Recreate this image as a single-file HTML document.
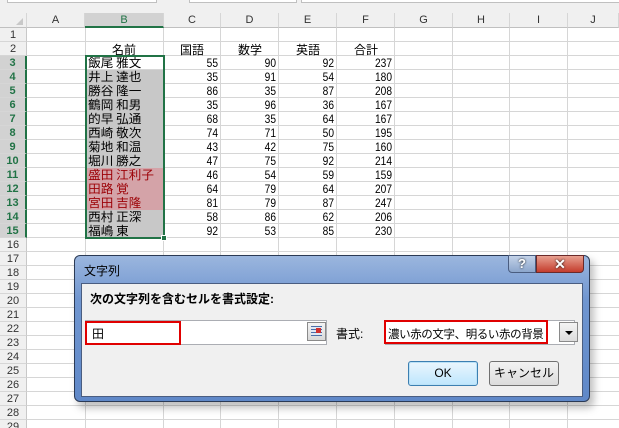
<!DOCTYPE html>
<html><head><meta charset="utf-8">
<style>
*{margin:0;padding:0;box-sizing:border-box}
html,body{width:619px;height:428px;overflow:hidden}
body{background:#fff;position:relative;font-family:"Liberation Sans","Noto Sans CJK JP",sans-serif;font-size:12px;color:#000}
.a{position:absolute}
.vl{position:absolute;width:1px;height:415px;background:#d6d6d6}
.hl{position:absolute;left:0;width:619px;height:1px;background:#d6d6d6}
.rh{position:absolute;left:0;width:27px;height:14px;background:#f0f0f0;border-bottom:1px solid #d6d6d6;border-right:1px solid #c8c8c8;text-align:center;font-size:11px;line-height:14px;color:#333}
.ch{position:absolute;top:13px;height:15px;background:#f0f0f0;border-right:1px solid #d6d6d6;border-bottom:1px solid #c0c0c0;text-align:center;font-size:11px;line-height:15px;color:#333}
.num{position:absolute;text-align:right;font-size:12px;line-height:14px;transform:scaleX(0.85);transform-origin:right}
.nm{position:absolute;left:86px;width:78px;height:14px;line-height:14px;padding-left:2px;font-size:12px;font-family:"Noto Sans CJK JP",sans-serif;transform:scaleX(1.05);transform-origin:left}
</style></head><body>
<div class="a" style="left:0;top:0;width:619px;height:13px;background:#f0f0f0"></div>
<div class="a" style="left:7px;top:-1px;width:150px;height:4px;background:#fff;border:1px solid #c0c0c0"></div>
<div class="a" style="left:189px;top:-1px;width:108px;height:4px;background:#fff;border:1px solid #c0c0c0"></div>
<div class="a" style="left:301px;top:-1px;width:320px;height:4px;background:#fff;border:1px solid #c0c0c0"></div>
<div class="a" style="left:0;top:13px;width:27px;height:15px;background:#f0f0f0;border-right:1px solid #d6d6d6;border-bottom:1px solid #c0c0c0"></div>
<div class="a" style="left:16px;top:18px;width:0;height:0;border-left:7px solid transparent;border-bottom:7px solid #c8c8c8"></div>
<div class="ch" style="left:27px;width:58px">A</div>
<div class="ch" style="left:85px;width:79px;background:#d2d2d2;color:#217346;border-bottom:2px solid #217346">B</div>
<div class="ch" style="left:164px;width:57px">C</div>
<div class="ch" style="left:221px;width:58px">D</div>
<div class="ch" style="left:279px;width:58px">E</div>
<div class="ch" style="left:337px;width:58px">F</div>
<div class="ch" style="left:395px;width:58px">G</div>
<div class="ch" style="left:453px;width:57px">H</div>
<div class="ch" style="left:510px;width:58px">I</div>
<div class="ch" style="left:568px;width:51px">J</div>
<div class="vl" style="left:85px;top:28px"></div>
<div class="vl" style="left:163px;top:28px"></div>
<div class="vl" style="left:220px;top:28px"></div>
<div class="vl" style="left:278px;top:28px"></div>
<div class="vl" style="left:336px;top:28px"></div>
<div class="vl" style="left:394px;top:28px"></div>
<div class="vl" style="left:452px;top:28px"></div>
<div class="vl" style="left:509px;top:28px"></div>
<div class="vl" style="left:567px;top:28px"></div>
<div id="grid"></div>
<div class="a" style="left:86px;top:70px;width:77px;height:98px;background:#c8c8c8"></div>
<div class="a" style="left:86px;top:168px;width:77px;height:42px;background:#d4a3a8"></div>
<div class="a" style="left:86px;top:210px;width:77px;height:28px;background:#c8c8c8"></div>
<div id="rows"></div>
<script>
var r='',g='';
for(var i=1;i<=29;i++){var y=28+(i-1)*14;
 var sel=(i>=3&&i<=15);
 r+='<div class="rh" style="top:'+y+'px;'+(sel?'background:#d2d2d2;color:#217346;font-weight:bold;border-right:2px solid #217346':'')+'">'+i+'</div>';
 g+='<div class="hl" style="top:'+(y+13)+'px"></div>';}
document.getElementById('rows').innerHTML=r;document.getElementById('grid').innerHTML=g;
</script>
<div class="a" style="left:112px;top:41px;font-size:12px">名前</div>
<div class="a" style="left:180px;top:41px">国語</div>
<div class="a" style="left:238px;top:41px">数学</div>
<div class="a" style="left:296px;top:41px">英語</div>
<div class="a" style="left:354px;top:41px">合計</div>
<div id="data"></div>
<script>
var d=[["飯尾 雅文",55,90,92,237],["井上 達也",35,91,54,180],["勝谷 隆一",86,35,87,208],["鶴岡 和男",35,96,36,167],["的早 弘通",68,35,64,167],["西崎 敬次",74,71,50,195],["菊地 和温",43,42,75,160],["堀川 勝之",47,75,92,214],["盛田 江利子",46,54,59,159],["田路 覚",64,79,64,207],["宮田 吉隆",81,79,87,247],["西村 正深",58,86,62,206],["福嶋 東",92,53,85,230]];
var h='',xs=[218,276,334,392];
for(var i=0;i<d.length;i++){var y=56+i*14;var red=(i>=8&&i<=10);
 h+='<div class="nm" style="top:'+y+'px;'+(red?'color:#9c0006':'')+'">'+d[i][0]+'</div>';
 for(var j=0;j<4;j++)h+='<div class="num" style="left:'+(xs[j]-40)+'px;width:40px;top:'+y+'px">'+d[i][j+1]+'</div>';}
document.getElementById('data').innerHTML=h;
</script>
<div class="a" style="left:85px;top:55px;width:80px;height:184px;border:2px solid #217346"></div>
<div class="a" style="left:161px;top:235px;width:6px;height:6px;background:#217346;border:1px solid #fff"></div>
<div class="a" style="left:78px;top:260px;width:516px;height:148px;background:rgba(0,0,0,0.25);filter:blur(4px);border-radius:6px"></div>
<div class="a" style="left:74px;top:255px;width:516px;height:147px;border-radius:6px;border:1px solid #2b3a55;background:linear-gradient(180deg,#9bb6de 0%,#7096d0 30%,#5f88c8 100%)"></div>
<div class="a" style="left:84px;top:262px;font-size:12px;color:#000">文字列</div>
<div class="a" style="left:508px;top:255px;width:28px;height:18px;border:1px solid #4a5d80;border-radius:0 0 0 4px;background:linear-gradient(#c3d2e8,#8ca6cc);color:#fff;font-weight:bold;text-align:center;line-height:16px;font-size:13px;text-shadow:0 0 2px #000">?</div>
<div class="a" style="left:536px;top:255px;width:48px;height:18px;border:1px solid #6a2a2a;border-radius:0 0 4px 0;background:linear-gradient(#e8a090,#c43c2c);color:#fff;font-weight:bold;text-align:center;line-height:16px;font-size:14px;text-shadow:0 0 2px #000">✕</div>
<div class="a" style="left:81px;top:283px;width:502px;height:114px;background:#f0f0f0;border:1px solid #4a5d80"></div>
<div class="a" style="left:90px;top:290px;font-weight:bold;font-size:12px">次の文字列を含むセルを書式設定:</div>
<div class="a" style="left:85px;top:320px;width:242px;height:25px;background:#fff;border:1px solid #abadb3"></div>
<div class="a" style="left:85px;top:321px;width:96px;height:24px;border:2px solid #e00000"></div>
<div class="a" style="left:92px;top:325px;font-size:12px">田</div>
<div class="a" style="left:307px;top:322px;width:19px;height:19px;border:1px solid #8a8a8a;background:linear-gradient(#f4f4f4,#d8d8d8)"></div>
<div class="a" style="left:311px;top:326px;width:11px;height:10px;background:repeating-linear-gradient(#4b6ea8 0 1px,#dfe7f3 1px 3px);"></div>
<div class="a" style="left:316px;top:328px;width:5px;height:5px;background:#d03030"></div>
<div class="a" style="left:336px;top:325px;font-size:12px">書式:</div>
<div class="a" style="left:385px;top:320px;width:190px;height:25px;background:#fff;border:1px solid #abadb3"></div>
<div class="a" style="left:384px;top:320px;width:164px;height:24px;border:2px solid #e00000"></div>
<div class="a" style="left:388px;top:326px;font-size:11.5px;letter-spacing:-0.4px;white-space:nowrap">濃い赤の文字、明るい赤の背景</div>
<div class="a" style="left:559px;top:322px;width:19px;height:20px;border:1px solid #8a8a8a;background:linear-gradient(#f4f4f4,#dcdcdc)"></div>
<div class="a" style="left:565px;top:331px;width:0;height:0;border-left:4px solid transparent;border-right:4px solid transparent;border-top:4px solid #000"></div>
<div class="a" style="left:408px;top:361px;width:70px;height:25px;border:1px solid #3c7fb1;border-radius:3px;background:linear-gradient(#eaf6fd,#bee6fd);text-align:center;line-height:23px;font-size:12px;box-shadow:inset 0 0 0 1px #bbe2f7">OK</div>
<div class="a" style="left:489px;top:361px;width:70px;height:25px;border:1px solid #707070;border-radius:3px;background:linear-gradient(#f2f2f2,#dcdcdc);text-align:center;line-height:23px;font-size:12px">キャンセル</div>
</body></html>
